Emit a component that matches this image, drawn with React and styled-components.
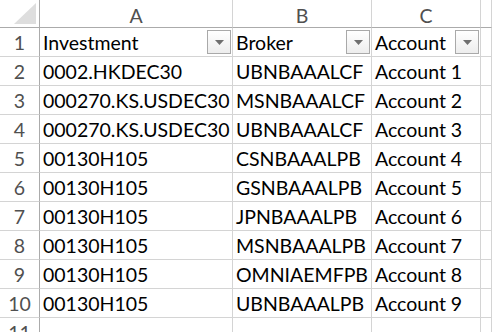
import React from "react";
import styled, { createGlobalStyle } from "styled-components";

const rows = [
  ["0002.HKDEC30", "UBNBAAALCF", "Account 1"],
  ["000270.KS.USDEC30", "MSNBAAALCF", "Account 2"],
  ["000270.KS.USDEC30", "UBNBAAALCF", "Account 3"],
  ["00130H105", "CSNBAAALPB", "Account 4"],
  ["00130H105", "GSNBAAALPB", "Account 5"],
  ["00130H105", "JPNBAAALPB", "Account 6"],
  ["00130H105", "MSNBAAALPB", "Account 7"],
  ["00130H105", "OMNIAEMFPB", "Account 8"],
  ["00130H105", "UBNBAAALPB", "Account 9"],
  ["", "", ""],
];

const headers = ["Investment", "Broker", "Account"];

function FilterButton() {
  return (
    <DropButton>
      <svg width="9" height="5" viewBox="0 0 9 5">
        <polygon points="0,0 9,0 4.5,5" fill="#6f6f6f" />
      </svg>
    </DropButton>
  );
}

export default function App() {
  return (
    <>
      <GlobalStyle />
      <Sheet>
        <Corner>
          <svg width="22" height="21" viewBox="0 0 22 21">
            <polygon points="22,0 22,21 0,21" fill="#dedede" />
          </svg>
        </Corner>
        {["A", "B", "C", ""].map((l, i) => (
          <ColHead key={i}>{l}</ColHead>
        ))}

        <RowHead>1</RowHead>
        {headers.map((h) => (
          <Cell key={h}>
            <span>{h}</span>
            <FilterButton />
          </Cell>
        ))}
        <Cell />

        {rows.map((r, i) => (
          <React.Fragment key={i}>
            <RowHead>{i + 2}</RowHead>
            {r.map((v, j) => (
              <Cell key={j}>{v}</Cell>
            ))}
            <Cell />
          </React.Fragment>
        ))}
      </Sheet>
    </>
  );
}

const GlobalStyle = createGlobalStyle`
  html, body {
    margin: 0;
    padding: 0;
    background: #fff;
    overflow: hidden;
  }
  body {
    font-family: Lato, "Noto Sans", sans-serif;
  }
`;

const Sheet = styled.div`
  display: grid;
  grid-template-columns: 40px 193px 139px 109px 1fr;
  grid-auto-rows: 29px;
  grid-template-rows: 28px;
  width: 492px;
  height: 332px;
  overflow: hidden;
`;

const Corner = styled.div`
  border-right: 1px solid #ababab;
  border-bottom: 1px solid #ababab;
  display: flex;
  align-items: flex-end;
  justify-content: flex-end;
  padding: 0 3px 3px 0;
`;

const ColHead = styled.div`
  border-right: 1px solid #d4d4d4;
  border-bottom: 1px solid #ababab;
  display: flex;
  align-items: center;
  justify-content: center;
  padding-top: 3px;
  font-size: 19.5px;
  color: #505050;
`;

const RowHead = styled.div`
  border-right: 1px solid #ababab;
  border-bottom: 1px solid #d4d4d4;
  display: flex;
  align-items: center;
  justify-content: center;
  font-size: 19.5px;
  color: #505050;
`;

const Cell = styled.div`
  border-right: 1px solid #d4d4d4;
  border-bottom: 1px solid #d4d4d4;
  display: flex;
  align-items: center;
  justify-content: space-between;
  padding-left: 3px;
  padding-right: 1px;
  font-size: 19.5px;
  color: #000;
  white-space: nowrap;
  overflow: hidden;
`;

const DropButton = styled.div`
  width: 24px;
  height: 24px;
  box-sizing: border-box;
  border: 1px solid #a9a9a9;
  background: linear-gradient(#ffffff, #ededed);
  display: flex;
  align-items: center;
  justify-content: center;
  flex-shrink: 0;
`;
